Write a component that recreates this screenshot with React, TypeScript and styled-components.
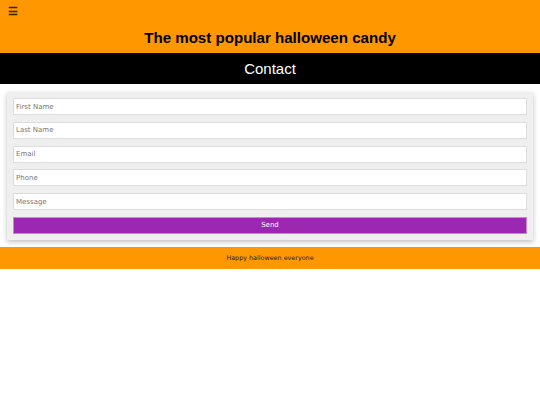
import * as React from 'react'
import styled, { createGlobalStyle } from 'styled-components'

const GlobalStyle = createGlobalStyle`
  body {
    margin: 0;
    background: #fff;
    font-family: "DejaVu Sans", Verdana, sans-serif;
  }
`

const Header = styled.header`
  background-color: #ff9800;
  height: 53px;
  display: flex;
  flex-direction: column;
  padding: 4px 8px 0;
  box-sizing: border-box;
`

const MenuButton = styled.button`
  align-self: flex-start;
  background: none;
  border: 0;
  padding: 0;
  font-size: 11px;
  line-height: 14px;
  font-weight: bold;
  color: #3a2400;
  cursor: pointer;
`

const Title = styled.h1`
  margin: 11px 0 0;
  text-align: center;
  font-family: "Liberation Sans", Arial, sans-serif;
  font-size: 15.1px;
  font-weight: bold;
  color: #000;
`

const NavBar = styled.nav`
  background-color: #000;
  color: #fff;
  height: 31px;
  display: flex;
  align-items: center;
  justify-content: center;
  font-family: "Liberation Sans", Arial, sans-serif;
  font-size: 15px;
`

const Card = styled.form`
  margin: 8px 7px 7px;
  padding: 6px 6px 6px;
  background-color: #efefef;
  box-shadow: 0 2px 5px rgba(0, 0, 0, 0.25);
  display: flex;
  flex-direction: column;
  gap: 6.8px;
`

const Field = styled.input`
  height: 17px;
  box-sizing: border-box;
  border: 1px solid #ddd;
  background: #fff;
  padding: 0 2px;
  font-family: "DejaVu Sans", Verdana, sans-serif;
  font-size: 7px;
  outline: none;

  &::placeholder {
    color: #777;
  }
`

const SendButton = styled.button`
  height: 17px;
  border: 1px solid #c28ad0;
  background-color: #9c27b0;
  color: #fff;
  font-family: "DejaVu Sans", Verdana, sans-serif;
  font-size: 7px;
  padding: 0;
`

const Footer = styled.footer`
  background-color: #ff9800;
  height: 22px;
  display: flex;
  align-items: center;
  justify-content: center;
  font-size: 6.4px;
  color: #222;
`

const fields = ['First Name', 'Last Name', 'Email', 'Phone', 'Message']

export default function App() {
  return (
    <>
      <GlobalStyle />
      <Header>
        <MenuButton>☰</MenuButton>
        <Title>The most popular halloween candy</Title>
      </Header>
      <NavBar>Contact</NavBar>
      <Card onSubmit={e => e.preventDefault()}>
        {fields.map(f => (
          <Field key={f} placeholder={f} />
        ))}
        <SendButton type="submit">Send</SendButton>
      </Card>
      <Footer>Happy halloween everyone</Footer>
    </>
  )
}
